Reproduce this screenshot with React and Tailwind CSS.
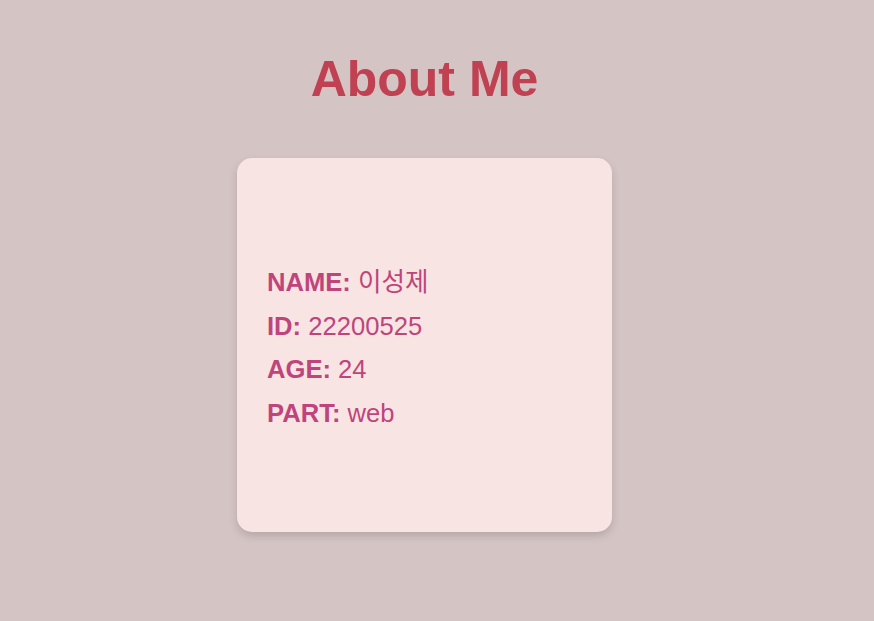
export default function App() {
  const rows = [
    { label: "NAME:", value: "이성제" },
    { label: "ID:", value: "22200525" },
    { label: "AGE:", value: "24" },
    { label: "PART:", value: "web" },
  ];

  return (
    <div
      className="min-h-screen w-full bg-[#d5c4c4] flex flex-col items-center pr-[25px]"
      style={{ fontFamily: '"Liberation Sans", Arial, "Noto Sans CJK KR", sans-serif' }}
    >
      <h1 className="mt-[51px] text-[50px] leading-[56px] font-bold text-[#bf4152]">About Me</h1>

      {/* Card */}
      <div className="mt-[51px] w-[375px] h-[374px] rounded-[15px] bg-[#f7e4e3] shadow-[0_4px_8px_rgba(0,0,0,0.15)] px-[30px] pt-[103px]">
        {rows.map((row) => (
          <p key={row.label} className="text-[25.6px] leading-[43.7px] text-[#c0447c]">
            <span className="font-bold">{row.label}</span> {row.value}
          </p>
        ))}
      </div>
    </div>
  );
}
